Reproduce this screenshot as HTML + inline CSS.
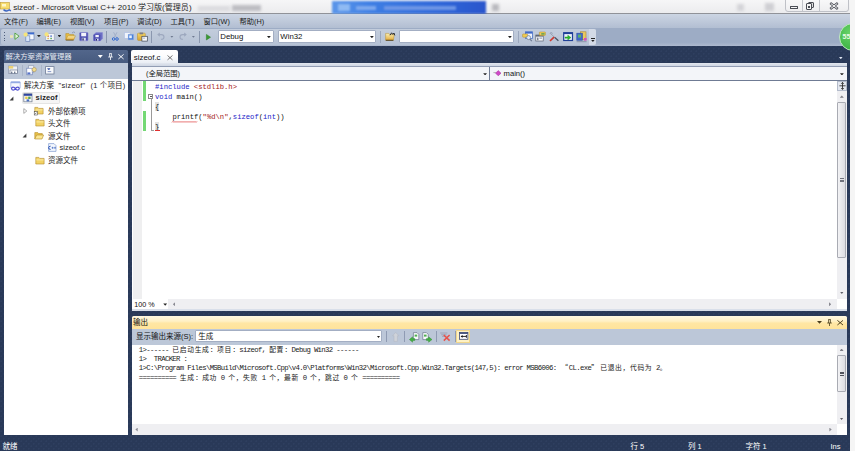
<!DOCTYPE html>
<html lang="zh-CN">
<head>
<meta charset="utf-8">
<title>sizeof - Microsoft Visual C++ 2010</title>
<style>
html,body{margin:0;padding:0;}
body{width:855px;height:451px;overflow:hidden;background:#f5f5f5;position:relative;
  font-family:"Liberation Sans","Noto Sans CJK SC",sans-serif;font-size:7.5px;color:#111;}
.a{position:absolute;white-space:nowrap;line-height:1;}
svg.a{overflow:visible;}
#win{left:0;top:0;width:850px;height:451px;background-color:#293958;background-image:radial-gradient(circle at 1.25px 1.25px,rgba(86,105,148,.13) .6px,transparent 1.2px),radial-gradient(circle at 3.75px 3.75px,rgba(86,105,148,.13) .6px,transparent 1.2px);background-size:5px 5px;overflow:hidden;}
#title{left:0;top:0;width:850px;height:14px;background:linear-gradient(#f6f6f7,#ececee);border-bottom:1px solid #909298;box-sizing:border-box;}
#menu{left:0;top:14px;width:850px;height:14px;background:linear-gradient(#ccd5e3,#b2bed2);}
#tool{left:0;top:28px;width:850px;height:18px;background:linear-gradient(#9dacc5,#9dacc5 80%,#adb9ce);}
#strip{left:1px;top:29px;width:595px;height:16px;background:linear-gradient(#c3cddc,#b6c2d5);border-radius:2px;}
.mi{top:17.9px;font-size:7.3px;color:#1a1a1a;}
.combo{background:#fff;border:1px solid #a3aec3;box-sizing:border-box;height:13px;top:30.3px;font-size:7.8px;border-radius:1px;}
.combo span{position:absolute;left:1.8px;top:2.2px;}
.dd{width:3.8px;height:2.3px;background:#222;clip-path:polygon(0 0,100% 0,50% 100%);}
.sep{width:1px;height:12px;background:#8a97af;top:31px;}
.mono{font-family:"Liberation Mono","Noto Sans CJK SC",monospace;}
.hdr{background:#4d6082;color:#fff;}
.tbar{background:#bcc7d8;}
.tree{font-size:7.5px;color:#1e1e1e;}
.code{font-size:7.2px;}
.out{font-size:7.3px;letter-spacing:-0.65px;color:#1a1a1a;white-space:pre;height:9px;line-height:9px;}
.cj{font-family:'Noto Sans CJK SC',sans-serif;font-size:6.8px;letter-spacing:.64px;line-height:0;}
.st{top:443px;color:#fff;font-size:7.5px;}
.track{background:#efeff2;}
.thumb{background:linear-gradient(90deg,#f3f3f5,#dcdce1);border:1px solid #a9abb3;box-sizing:border-box;border-radius:1px;}
</style>
</head>
<body>
<div id="win" class="a">
<div id="title" class="a"></div>
<div class="a" style="left:198px;top:5.5px;width:32px;height:5px;background:#d6d6da;filter:blur(1.6px);opacity:.8"></div>
<div class="a" style="left:232px;top:5px;width:29px;height:6px;background:#b4b4ba;filter:blur(1.6px);opacity:.85"></div>
<div class="a" style="left:332px;top:1px;width:154px;height:12.5px;background:linear-gradient(90deg,#5b96ea,#3f7fe4 25%,#2f66d8 70%,#2a55cc);filter:blur(.8px);"></div>
<div class="a" style="left:338px;top:4px;width:12px;height:7px;background:#8fbaf3;filter:blur(1px);"></div>
<div class="a" style="left:356px;top:5.5px;width:20px;height:4px;background:#7fa9ee;filter:blur(1.2px);"></div>
<div class="a" style="left:384px;top:5.5px;width:72px;height:4px;background:#6f97e6;filter:blur(1.2px);"></div>
<div class="a" style="left:492px;top:4px;width:7px;height:7px;background:#b9b9be;filter:blur(1.5px);"></div>
<div class="a" style="left:737px;top:4px;width:7px;height:7px;background:#d4d4d8;filter:blur(1.5px);"></div>
<div class="a" style="left:765px;top:3px;width:9px;height:8px;background:#cfcfd3;filter:blur(1.5px);"></div>
<div class="a" style="left:13.3px;top:3.8px;font-size:8.05px;color:#1c1c1c;">sizeof - Microsoft Visual C++ 2010 学习版(管理员)</div>
<svg class="a" style="left:0;top:1px" width="13" height="12" viewBox="0 0 13 12"><rect x="0.3" y="1.5" width="9" height="6.5" fill="#f6dc6e" stroke="#c29a30" stroke-width=".6"/><rect x="2" y="3" width="4" height="2.5" fill="#fff6c8"/><path d="M3.5 8.6 q3 2.6 5.8 0.2 l1.6 1" fill="none" stroke="#3d67c2" stroke-width="1.4"/></svg>
<div class="a" style="left:785px;top:-1px;width:64px;height:12.5px;border:1px solid #bfc1c7;border-radius:0 0 3px 3px;background:linear-gradient(#f8f8f9,#eeeef0);box-sizing:border-box;"></div>
<div class="a" style="left:802.1px;top:0;width:1px;height:11px;background:#c2c4ca;"></div>
<div class="a" style="left:818.5px;top:0;width:1px;height:11px;background:#c2c4ca;"></div>
<div class="a" style="left:790px;top:5.6px;width:8px;height:3.6px;border:1px solid #4a4d55;box-sizing:border-box;background:#f4f4f4;border-radius:.5px"></div>
<div class="a" style="left:807.6px;top:2px;width:6px;height:6px;border:1px solid #4a4d55;box-sizing:border-box;background:#ddd;border-radius:1px"></div>
<div class="a" style="left:806px;top:3.4px;width:6.4px;height:6.4px;border:1px solid #4a4d55;box-sizing:border-box;background:#f4f4f4;border-radius:1px"></div>
<div class="a" style="left:808.4px;top:5.8px;width:1.8px;height:1.8px;background:#4a4d55;"></div>
<svg class="a" style="left:830px;top:3px" width="8" height="6" viewBox="0 0 8 6"><path d="M1.2 0.8 L6.8 5.2 M6.8 0.8 L1.2 5.2" stroke="#50535b" stroke-width="2.4" stroke-linecap="square"/><path d="M1.2 0.8 L6.8 5.2 M6.8 0.8 L1.2 5.2" stroke="#fafafa" stroke-width="1" stroke-linecap="square"/></svg>
<div id="menu" class="a"></div>
<div class="a mi" style="left:4px;">文件(F)</div>
<div class="a mi" style="left:36.5px;">编辑(E)</div>
<div class="a mi" style="left:70px;">视图(V)</div>
<div class="a mi" style="left:104px;">项目(P)</div>
<div class="a mi" style="left:137px;">调试(D)</div>
<div class="a mi" style="left:170.5px;">工具(T)</div>
<div class="a mi" style="left:203.5px;">窗口(W)</div>
<div class="a mi" style="left:239.5px;">帮助(H)</div>
<div id="tool" class="a"></div>
<div id="strip" class="a"></div>
<div class="a" style="left:589px;top:29px;width:7px;height:16px;background:#d3dae6;border-radius:0 2px 2px 0;"></div>
<div class="a" style="left:3.6px;top:32.4px;width:1.1px;height:1.1px;background:#4f5e7a;"></div>
<div class="a" style="left:3.6px;top:35.0px;width:1.1px;height:1.1px;background:#4f5e7a;"></div>
<div class="a" style="left:3.6px;top:37.6px;width:1.1px;height:1.1px;background:#4f5e7a;"></div>
<div class="a" style="left:3.6px;top:40.2px;width:1.1px;height:1.1px;background:#4f5e7a;"></div>
<div class="a combo" style="left:217.5px;width:56px;"><span>Debug</span></div>
<div class="a dd" style="left:267px;top:36px;"></div>
<div class="a combo" style="left:277.5px;width:98.5px;"><span>Win32</span></div>
<div class="a dd" style="left:370px;top:36px;"></div>
<div class="a combo" style="left:398.5px;width:115.5px;"></div>
<div class="a dd" style="left:508px;top:36px;"></div>
<div class="a sep" style="left:105.8px;"></div>
<div class="a sep" style="left:150.7px;"></div>
<div class="a sep" style="left:198.9px;"></div>
<div class="a sep" style="left:379.9px;background:#9ba7bd;"></div>
<div class="a sep" style="left:517.5px;background:#9ba7bd;"></div>
<div class="a dd" style="left:37px;top:35px;"></div>
<div class="a dd" style="left:57.5px;top:35px;"></div>
<div class="a dd" style="left:170px;top:35.5px;background:#6f7a90"></div>
<div class="a dd" style="left:191.5px;top:35.5px;background:#6f7a90"></div>
<svg class="a" style="left:10px;top:32px" width="10" height="9" viewBox="0 0 10 9"><path d="M0 3.2 h3 v2.6 h-3z" fill="#ece6b4"/><path d="M4.9 1 L9.1 4.2 L4.9 7.4z" fill="#e6f5da" stroke="#4da040" stroke-width=".9"/></svg>
<svg class="a" style="left:23px;top:30.5px" width="12" height="12" viewBox="0 0 12 12"><rect x="4.8" y="1.6" width="6.2" height="7.2" fill="#f6f9fe" stroke="#6f86b8" stroke-width=".7"/><rect x="4.8" y="1.6" width="6.2" height="1.8" fill="#3c6cd0"/><rect x="2.8" y="4.8" width="4" height="5.8" fill="#d6e4f8" stroke="#6f86b8" stroke-width=".7"/><circle cx="2.6" cy="3.6" r="2.1" fill="#f5e47c"/></svg>
<svg class="a" style="left:43.5px;top:30.5px" width="11" height="12" viewBox="0 0 11 12"><rect x="1.8" y="2.6" width="8.4" height="7" fill="#f4f6fa" stroke="#9aa5ba" stroke-width=".6"/><rect x="1.8" y="9.2" width="8.4" height=".9" fill="#6a7aa0"/><rect x="3.4" y="4.4" width="1.4" height="1.4" fill="#d04a3a"/><rect x="6.4" y="4.4" width="1.4" height="1.4" fill="#3b62c4"/><rect x="3.4" y="6.8" width="1.4" height="1.4" fill="#e0b030"/><rect x="6.4" y="6.8" width="1.4" height="1.4" fill="#4aa04a"/><circle cx="2.6" cy="3.4" r="2.1" fill="#f5e47c"/></svg>
<svg class="a" style="left:64.5px;top:31.4px" width="11" height="10" viewBox="0 0 11 10"><defs><linearGradient id="fg2" x1="0" y1="0" x2="0" y2="1"><stop offset="0" stop-color="#fbf0b0"/><stop offset="1" stop-color="#e8a834"/></linearGradient></defs><path d="M0.8 9 V2.6 h3 l1 1 h4 v1.4" fill="#e8bc44" stroke="#b08a28" stroke-width=".5"/><path d="M0.8 9 L2.8 4.8 h7.6 L8.6 9z" fill="url(#fg2)" stroke="#b08a28" stroke-width=".5"/><path d="M0.8 9.1 h7.8" stroke="#5a4416" stroke-width=".7"/><path d="M7 2 q1.6 -1.8 3 -0.4" fill="none" stroke="#7c8aa4" stroke-width=".7"/></svg>
<svg class="a" style="left:79px;top:32px" width="10" height="9.4" viewBox="0 0 10 9.4"><rect x="0.6" y="0.5" width="8.4" height="8.2" rx=".8" fill="#4d4fb0" stroke="#7f82d0" stroke-width=".6"/><rect x="2.2" y="0.9" width="5" height="3.4" fill="#f2f3fb"/><rect x="2.8" y="5.8" width="4" height="2.8" fill="#dcdff2"/><rect x="3.4" y="6.3" width="1.3" height="2.2" fill="#1f2460"/></svg>
<svg class="a" style="left:92.5px;top:31.8px" width="10.4" height="9.6" viewBox="0 0 10.4 9.6"><path d="M3 0.6 h6.6 v6 l-2 2.2 h-7 v-6z" fill="#6b6ec4" stroke="#8a8cd6" stroke-width=".5"/><rect x="0.6" y="2.6" width="6.8" height="6.2" rx=".6" fill="#4d4fb0"/><rect x="2.4" y="3" width="3.4" height="2.2" fill="#f2f3fb"/><rect x="2.6" y="6.6" width="3" height="2" fill="#dcdff2"/><rect x="3" y="7" width="1" height="1.6" fill="#1f2460"/></svg>
<svg class="a" style="left:111.8px;top:32.2px" width="7" height="9" viewBox="0 0 7 9"><path d="M1.6 0.3 L4.5 5.6 M5 0.3 L2.1 5.6" stroke="#a3b0ca" stroke-width="1"/><circle cx="1.6" cy="7" r="1.3" fill="none" stroke="#356ad0" stroke-width="1"/><circle cx="5" cy="7" r="1.3" fill="none" stroke="#356ad0" stroke-width="1"/></svg>
<svg class="a" style="left:123.6px;top:32px" width="11" height="9" viewBox="0 0 11 9"><rect x="0.5" y="0.7" width="5.6" height="5.6" fill="#f0f4fb" stroke="#aebfe4" stroke-width=".6"/><rect x="4.2" y="2.4" width="5.2" height="5.4" fill="#4a80d8" stroke="#7ea2e2" stroke-width=".5"/><rect x="5.2" y="3.4" width="2.6" height="2.8" fill="#e8f0fc"/></svg>
<svg class="a" style="left:137.3px;top:31.5px" width="11" height="10" viewBox="0 0 11 10"><defs><linearGradient id="fg3" x1="0" y1="0" x2="0" y2="1"><stop offset="0" stop-color="#f3d768"/><stop offset="1" stop-color="#d9a230"/></linearGradient></defs><rect x="0.5" y="1.2" width="7.8" height="7.2" rx=".8" fill="url(#fg3)" stroke="#b48a26" stroke-width=".5"/><rect x="2.6" y="0.5" width="3.6" height="1.8" fill="#7d7d86"/><rect x="4.9" y="4.3" width="5.4" height="4.8" fill="#f8fafd" stroke="#3c4452" stroke-width=".7"/><rect x="6" y="5.4" width="2.2" height="1.6" fill="#c3cbd9"/></svg>
<svg class="a" style="left:156.5px;top:32px" width="8" height="8" viewBox="0 0 8 8"><path d="M1.2 2.6 h3.2 q2.6 0 2.6 2.4 q0 2.4 -2.8 2.4" fill="none" stroke="#9da8bf" stroke-width="1.1"/><path d="M0.2 2.6 L2.8 0.4 V4.8z" fill="#9da8bf"/></svg>
<svg class="a" style="left:178.5px;top:32px" width="8" height="8" viewBox="0 0 8 8"><path d="M6.8 2.6 h-3.2 q-2.6 0 -2.6 2.4 q0 2.4 2.8 2.4" fill="none" stroke="#9da8bf" stroke-width="1.1"/><path d="M7.8 2.6 L5.2 0.4 V4.8z" fill="#9da8bf"/></svg>
<svg class="a" style="left:206px;top:33.6px" width="5.4" height="6.6" viewBox="0 0 5.4 6.6"><path d="M0.4 0.4 L4.6 3.2 L0.4 6z" fill="#3a9a32" stroke="#2b7d25" stroke-width=".5"/></svg>
<svg class="a" style="left:385px;top:32.2px" width="10.5" height="9.5" viewBox="0 0 10.5 9.5"><defs><linearGradient id="fg1" x1="0" y1="0" x2="0" y2="1"><stop offset="0" stop-color="#f8efb4"/><stop offset="1" stop-color="#e6ac3c"/></linearGradient></defs><path d="M0.6 1.4 h3.2 l0.8 1.2 h4.6 l-0.8 5.6 h-7.8z" fill="url(#fg1)" stroke="#b98f30" stroke-width=".5"/><path d="M0.8 8.3 h7.6" stroke="#4a3a18" stroke-width=".9"/><path d="M5 3.2 l1.6 -2.4 l1.2 1.6 l1.2 -1.4 l0.8 2.4" fill="none" stroke="#222" stroke-width=".9"/></svg>
<svg class="a" style="left:521.5px;top:31px" width="11" height="11" viewBox="0 0 11 11"><rect x="3.4" y="0.8" width="7" height="6.6" fill="#eef3fc" stroke="#4a73c8" stroke-width=".8"/><rect x="3.4" y="0.8" width="7" height="1.8" fill="#3f68c8"/><rect x="0.6" y="3" width="5" height="3.2" rx=".6" fill="#f0cc55" stroke="#b08a26" stroke-width=".5"/><circle cx="6.6" cy="6.6" r="2" fill="#dfe9f8" stroke="#6a7890" stroke-width=".7"/><path d="M8 8.2 L9.8 10.2" stroke="#6a7890" stroke-width="1.1"/></svg>
<svg class="a" style="left:535px;top:31px" width="11" height="11" viewBox="0 0 11 11"><rect x="0.8" y="4" width="7.4" height="6" fill="#f7f8fb" stroke="#5d6675" stroke-width=".7"/><rect x="0.8" y="4" width="7.4" height="1.6" fill="#5d6675"/><rect x="2.2" y="6.6" width="1.2" height="2.6" fill="#5d6675"/><rect x="4.4" y="6.6" width="2.6" height="1" fill="#8791a3"/><rect x="4.4" y="1" width="6" height="3.4" rx=".6" fill="#f0cc55" stroke="#b08a26" stroke-width=".5"/><rect x="6.2" y="2.2" width="3.4" height="1.4" fill="#58a050"/></svg>
<svg class="a" style="left:549px;top:32px" width="11" height="10" viewBox="0 0 11 10"><path d="M9.4 8.8 L5 4.8" stroke="#4a5262" stroke-width="1.2"/><path d="M5 4.8 L1.6 1.6" stroke="#9aa3b5" stroke-width="1"/><path d="M0.8 1.4 q1.4 -1.4 2.8 0" fill="none" stroke="#8a94a8" stroke-width=".9"/><path d="M1 9 L5 5.2" stroke="#d2382c" stroke-width="1.7"/><path d="M5 5.2 L8.8 1.6" stroke="#c9ced9" stroke-width=".9"/></svg>
<svg class="a" style="left:563px;top:32px" width="10.4" height="9.2" viewBox="0 0 10.4 9.2"><rect x="0.7" y="0.7" width="8.8" height="7.8" fill="#eef3fc" stroke="#1f3f98" stroke-width="1.2"/><rect x="0.7" y="0.7" width="8.8" height="1.4" fill="#1f3f98"/><path d="M2 5 h2.8 v-1.8 l3.2 2.4 l-3.2 2.4 v-1.8 h-2.8z" fill="#28bc28" stroke="#1f8a1f" stroke-width=".4"/></svg>
<svg class="a" style="left:576px;top:30.5px" width="12" height="12" viewBox="0 0 12 12"><rect x="4.6" y="0.8" width="5.4" height="8" fill="#e9c860" stroke="#a88a2c" stroke-width=".6"/><rect x="0.8" y="2.2" width="5.6" height="7" fill="#3f68c8" stroke="#2c4fa8" stroke-width=".6"/><rect x="2" y="3.6" width="3" height="3" fill="#59b36a"/><rect x="8" y="7" width="2.6" height="2.6" fill="#d34fc0"/><rect x="0.6" y="10.2" width="10" height="1" fill="#8c96aa"/></svg>
<div class="a" style="left:590.8px;top:37.9px;width:4.2px;height:1px;background:#222;"></div>
<div class="a dd" style="left:591px;top:39.8px;"></div>
<div class="a" style="left:839px;top:22.5px;width:28px;height:28px;border-radius:50%;background:radial-gradient(circle at 40% 35%,#6ad46a,#3fb545 70%,#35a83c);border:1.5px solid #bdecbd;box-sizing:border-box;"></div>
<div class="a" style="left:842.6px;top:32.5px;font-size:7px;color:#eafbe8;font-weight:bold;">55</div>
<div class="a" style="left:4px;top:50px;width:123.8px;height:13px;border-radius:1.5px 1.5px 0 0;background:linear-gradient(#52668b,#475b7f);"></div>
<div class="a" style="left:5.5px;top:53.2px;color:#e4e9f2;font-size:7.35px;">解决方案资源管理器</div>
<div class="a dd" style="left:97.8px;top:55px;width:5px;height:2.9px;background:#fff"></div>
<svg class="a" style="left:108.1px;top:52.8px" width="5" height="7" viewBox="0 0 5 7"><path d="M1.6 0.3 v3.7 M3.4 0.3 v3.7 M1.6 0.6 h1.8 M0.2 4 h4.6 M2.5 4 v3" stroke="#fff" stroke-width=".8" fill="none"/></svg>
<svg class="a" style="left:117.9px;top:54px" width="6" height="5.4" viewBox="0 0 6 5.4"><path d="M0.4 0.4 L5.6 5 M5.6 0.4 L0.4 5" stroke="#fff" stroke-width=".95"/></svg>
<div class="a tbar" style="left:4px;top:63px;width:123.7px;height:16px;"></div>
<svg class="a" style="left:8px;top:65.4px" width="11" height="10" viewBox="0 0 11 10"><rect x="0.6" y="1" width="8.8" height="7.6" fill="#eef1f6" stroke="#8d99b0" stroke-width=".7"/><rect x="0.6" y="1" width="4.6" height="2.6" fill="#ecd275"/><rect x="2" y="5" width="7.4" height="3.6" fill="#fff" stroke="#6f7b92" stroke-width=".7"/><rect x="3" y="6.6" width="1.4" height="2" fill="#6f7b92"/><rect x="6" y="6.6" width="1.4" height="2" fill="#6f7b92"/></svg>
<div class="a" style="left:22px;top:65px;width:1px;height:11px;background:#a9b4c8;"></div>
<svg class="a" style="left:25.6px;top:65px" width="11" height="11" viewBox="0 0 11 11"><rect x="2.4" y="0.8" width="5.4" height="6.6" fill="#fbfcfe" stroke="#8d99b0" stroke-width=".7"/><rect x="0.8" y="3.2" width="5.4" height="6.6" fill="#fff" stroke="#6d80b5" stroke-width=".7"/><rect x="1.4" y="7.4" width="3" height="2" fill="#5572c8"/><circle cx="8.2" cy="4.6" r="2.1" fill="#f1dc8c" stroke="#a7905a" stroke-width=".6"/></svg>
<div class="a" style="left:40.5px;top:65px;width:1px;height:11px;background:#a9b4c8;"></div>
<svg class="a" style="left:45px;top:66.2px" width="10" height="9" viewBox="0 0 10 9"><rect x="0.6" y="0.6" width="8.4" height="7.4" fill="#f6f8fb" stroke="#6f7d98" stroke-width=".8"/><path d="M2.6 2.6 h2.4 l-1.2 1.4z M2.6 5.6 h3.6" fill="#3b55a5" stroke="#3b55a5" stroke-width=".6"/></svg>
<div class="a" style="left:4px;top:79px;width:123.7px;height:355.6px;background:#fff;"></div>
<div class="a tree" style="left:24px;top:82.2px;">解决方案</div>
<div class="a tree" style="left:58.6px;top:82.2px;letter-spacing:.25px;">"sizeof"</div>
<div class="a tree" style="left:90.6px;top:82.2px;letter-spacing:.15px;">(1 个项目)</div>
<div class="a" style="left:21.5px;top:92px;width:38.2px;height:11.6px;background:#f5f5f5;border:1px solid #e4e4e4;border-radius:1.5px;box-sizing:border-box;"></div>
<div class="a tree" style="left:35.6px;top:94.1px;font-weight:bold;letter-spacing:.15px;">sizeof</div>
<div class="a tree" style="left:48px;top:107.7px;">外部依赖项</div>
<div class="a tree" style="left:48px;top:119.8px;">头文件</div>
<div class="a tree" style="left:48px;top:132.7px;">源文件</div>
<div class="a tree" style="left:59.5px;top:144.2px;">sizeof.c</div>
<div class="a tree" style="left:48px;top:157.4px;">资源文件</div>
<svg class="a" style="left:10.2px;top:80.8px" width="11" height="10.5" viewBox="0 0 11 10.5"><rect x="0.8" y="0.7" width="9.4" height="6.8" rx=".6" fill="#f6f8fd" stroke="#a6b8e4" stroke-width=".8"/><rect x="0.8" y="0.7" width="9.4" height="1.5" fill="#93aae3"/><path d="M5.4 7.6 C4.2 5.6 1.6 5.6 1.6 7.6 C1.6 9.6 4.2 9.6 5.4 7.6 C6.6 5.6 9.2 5.6 9.2 7.6 C9.2 9.6 6.6 9.6 5.4 7.6z" fill="#fff" stroke="#4f4fd0" stroke-width="1.2"/></svg>
<svg class="a" style="left:8.9px;top:95.7px" width="5" height="5" viewBox="0 0 5 5"><path d="M4.4 0.6 V4.4 H0.6z" fill="#3c3c3c"/></svg>
<svg class="a" style="left:21.6px;top:133.1px" width="5" height="5" viewBox="0 0 5 5"><path d="M4.4 0.6 V4.4 H0.6z" fill="#3c3c3c"/></svg>
<svg class="a" style="left:22.6px;top:107.5px" width="5" height="6" viewBox="0 0 5 6"><path d="M0.8 0.6 L3.8 3 L0.8 5.4z" fill="#fff" stroke="#8d8d8d" stroke-width=".7"/></svg>
<svg class="a" style="left:23px;top:93px" width="10" height="10" viewBox="0 0 10 10"><rect x="0.8" y="0.8" width="8.2" height="8" fill="#f4f7fb" stroke="#7b8596" stroke-width=".8"/><rect x="0.8" y="0.8" width="8.2" height="2" fill="#2f459f"/><rect x="2.2" y="3.6" width="2.4" height="2.4" fill="#e8c94a"/><rect x="5.2" y="3.6" width="2.4" height="2.4" fill="#58a058"/><rect x="3.6" y="6.4" width="2.6" height="2" fill="#4a6fc0"/></svg>
<svg class="a" style="left:34.4px;top:105.7px" width="10" height="10" viewBox="0 0 10 10"><path d="M0.8 8 V1.4 h3 l0.9 1 h4.4 V8z" fill="#f2d264" stroke="#b1892a" stroke-width=".6"/><rect x="1.4" y="3.4" width="7.2" height="1" fill="#faeaa6"/><rect x="0.2" y="5.6" width="3.4" height="3.4" fill="#fff" stroke="#333" stroke-width=".5"/><path d="M1 8.2 l1.6 -1.6" stroke="#222" stroke-width=".6"/></svg>
<svg class="a" style="left:34.8px;top:118.0px" width="10" height="10" viewBox="0 0 10 10"><path d="M0.8 8 V1.4 h3 l0.9 1 h4.4 V8z" fill="#f2d264" stroke="#b1892a" stroke-width=".6"/><rect x="1.4" y="3.4" width="7.2" height="1" fill="#faeaa6"/></svg>
<svg class="a" style="left:34.4px;top:130.6px" width="10" height="10" viewBox="0 0 10 10"><path d="M0.8 8 V1.6 h3 l0.9 1 h3.6 v1.4" fill="#e9c24a" stroke="#b1892a" stroke-width=".6"/><path d="M0.8 8 L2.6 4 h7 L8 8z" fill="#fbe692" stroke="#b1892a" stroke-width=".6"/></svg>
<svg class="a" style="left:34.8px;top:155.6px" width="10" height="10" viewBox="0 0 10 10"><path d="M0.8 8 V1.4 h3 l0.9 1 h4.4 V8z" fill="#f2d264" stroke="#b1892a" stroke-width=".6"/><rect x="1.4" y="3.4" width="7.2" height="1" fill="#faeaa6"/></svg>
<svg class="a" style="left:47px;top:143.3px" width="10" height="9" viewBox="0 0 10 9"><path d="M1.6 0.6 h5.4 l2 2 v5.8 h-7.4z" fill="#f3f7fd" stroke="#7f9bd0" stroke-width=".7"/><path d="M3.6 3.2 q-2 0 -2 1.6 q0 1.6 2 1.6" fill="none" stroke="#2c55b8" stroke-width="1"/><path d="M4.6 4.8 h2 M5.6 3.8 v2 M7.2 4.8 h1.6 M8 3.8 v2" stroke="#2c55b8" stroke-width=".6"/></svg>
<div class="a" style="left:131.4px;top:49.8px;width:46.3px;height:13.4px;background:linear-gradient(#fff,#fbfcfd 50%,#e9edf4);border-radius:2px 2px 0 0;"></div>
<div class="a" style="left:131.5px;top:62.6px;width:715.5px;height:3.7px;background:linear-gradient(#e2e7ef,#cfd6e3);"></div>
<div class="a" style="left:133.8px;top:53.6px;font-size:7.9px;">sizeof.c</div>
<svg class="a" style="left:167.2px;top:54.8px" width="6" height="5.4" viewBox="0 0 6 5.4"><path d="M0.5 0.5 L5.5 4.9 M5.5 0.5 L0.5 4.9" stroke="#555" stroke-width=".8"/></svg>
<div class="a" style="left:838.6px;top:56.6px;width:4.4px;height:2.6px;background:#dfe5f0;clip-path:polygon(0 0,100% 0,50% 100%);"></div>
<div class="a" style="left:131.5px;top:66.2px;width:715.5px;height:14.6px;background:linear-gradient(#929db4,#929db4 8%,#6f7b94 9%);"></div>
<div class="a" style="left:131.5px;top:67px;width:357.6px;height:13px;background:#f3f5f9;"></div>
<div class="a" style="left:490.1px;top:67px;width:356.9px;height:13px;background:#f3f5f9;"></div>
<div class="a" style="left:146px;top:70.3px;font-size:7.3px;">(全局范围)</div>
<div class="a" style="left:503.6px;top:70px;font-size:7.6px;">main()</div>
<div class="a dd" style="left:483.2px;top:73.2px;"></div>
<div class="a dd" style="left:840px;top:73.2px;"></div>
<svg class="a" style="left:493px;top:70px" width="9" height="7" viewBox="0 0 9 7"><path d="M0.4 2.6 h2.6" stroke="#999" stroke-width=".7"/><path d="M5.2 0.6 L8 3.2 L5.2 5.8 L2.6 3.2z" fill="#d04ac8" stroke="#9c2a96" stroke-width=".5"/></svg>
<div class="a" style="left:131.5px;top:80.8px;width:715.5px;height:228.5px;background:#fff;"></div>
<div class="a" style="left:131.5px;top:309.3px;width:715.5px;height:2.1px;background:#d9dfea;"></div>
<div class="a" style="left:132.8px;top:80.8px;width:9.3px;height:218px;background:#efeff0;"></div>
<div class="a" style="left:143.2px;top:81px;width:3px;height:20px;background:#74d874;"></div>
<div class="a" style="left:143.2px;top:111px;width:3px;height:20px;background:#74d874;"></div>
<div class="a" style="left:155.2px;top:102.4px;width:4.1px;height:8.2px;background:#e2e2e2;"></div>
<div class="a" style="left:155.2px;top:121.8px;width:4.1px;height:8.4px;background:#e2e2e2;"></div>
<div class="a mono code" style="left:155px;top:83.89999999999999px;"><span style="color:#1c1cc8">#include</span> <span style="color:#a31515">&lt;stdlib.h&gt;</span></div>
<div class="a mono code" style="left:155px;top:93.89999999999999px;"><span style="color:#1c1cc8">void</span> main()</div>
<div class="a mono code" style="left:155px;top:103.89999999999999px;">{</div>
<div class="a mono code" style="left:172.4px;top:113.89999999999999px;">printf(<span style="color:#a31515">"%d\n"</span>,<span style="color:#1c1cc8">sizeof</span>(<span style="color:#1c1cc8">int</span>))</div>
<div class="a mono code" style="left:155px;top:123.89999999999999px;">}</div>
<div class="a" style="left:148.2px;top:94.1px;width:5.2px;height:5.2px;border:.7px solid #8a8a8a;box-sizing:border-box;background:#fff;"></div>
<div class="a" style="left:149.5px;top:96.4px;width:2.6px;height:.7px;background:#555;"></div>
<div class="a" style="left:151.4px;top:99.3px;width:.8px;height:31px;background:#9a9a9a;"></div>
<div class="a" style="left:151.4px;top:129.6px;width:2.6px;height:.8px;background:#9a9a9a;"></div>
<div class="a" style="left:155.2px;top:130.2px;width:4.4px;height:.9px;background:#e03030;"></div>
<svg class="a" style="left:172.4px;top:120.8px" width="26" height="2" viewBox="0 0 26 2"><path d="M0 1.4 l1 -1 l1 1 l1 -1 l1 1 l1 -1 l1 1 l1 -1 l1 1 l1 -1 l1 1 l1 -1 l1 1 l1 -1 l1 1 l1 -1 l1 1 l1 -1 l1 1 l1 -1 l1 1 l1 -1 l1 1 l1 -1 l1 1 l1 -1" fill="none" stroke="#dc3838" stroke-width=".75"/></svg>
<div class="a track" style="left:836.8px;top:80.8px;width:10.2px;height:218.2px;"></div>
<div class="a" style="left:836.8px;top:80.8px;width:10.2px;height:10.2px;background:#e3e7f0;border:1px solid #b3bbcb;box-sizing:border-box;"></div>
<svg class="a" style="left:838.6px;top:82px" width="7" height="8" viewBox="0 0 7 8"><path d="M0.4 3.8 h6.2 M3.5 0.4 v7 M2.2 1.8 L3.5 0.4 L4.8 1.8 M2.2 6 L3.5 7.4 L4.8 6" stroke="#222" stroke-width=".8" fill="none"/></svg>
<div class="a" style="left:839.8px;top:95.4px;width:4px;height:2.3px;background:#7d7d85;clip-path:polygon(50% 0,100% 100%,0 100%);"></div>
<div class="a thumb" style="left:837.4px;top:102.2px;width:8.8px;height:156px;"></div>
<div class="a" style="left:839.6px;top:178.4px;width:4.4px;height:.7px;background:#70727c;"></div>
<div class="a" style="left:839.6px;top:179.9px;width:4.4px;height:.7px;background:#70727c;"></div>
<div class="a" style="left:839.6px;top:181.4px;width:4.4px;height:.7px;background:#70727c;"></div>
<div class="a" style="left:839.8px;top:291.6px;width:4px;height:2.3px;background:#606068;clip-path:polygon(0 0,100% 0,50% 100%);"></div>
<div class="a track" style="left:168.3px;top:298.8px;width:668.5px;height:10.5px;"></div>
<div class="a" style="left:134.3px;top:300.8px;font-size:7.2px;">100 %</div>
<div class="a dd" style="left:163.3px;top:303.4px;"></div>
<div class="a" style="left:172.8px;top:302.2px;width:2.3px;height:4px;background:#8a8a92;clip-path:polygon(100% 0,100% 100%,0 50%);"></div>
<div class="a" style="left:829px;top:302.2px;width:2.3px;height:4px;background:#8a8a92;clip-path:polygon(0 0,100% 50%,0 100%);"></div>
<div class="a" style="left:131.5px;top:315.6px;width:715.5px;height:13.2px;background:linear-gradient(#fff8e2,#fff0c4 40%,#ffe6a4 55%,#ffe39b);border-radius:1.5px 1.5px 0 0;"></div>
<div class="a" style="left:133px;top:318.8px;font-size:7.5px;">输出</div>
<div class="a dd" style="left:817px;top:320.9px;width:5px;height:2.9px;background:#4a3d1c"></div>
<svg class="a" style="left:827.2px;top:318.5px" width="5" height="7" viewBox="0 0 5 7"><path d="M1.6 0.3 v3.7 M3.4 0.3 v3.7 M1.6 0.6 h1.8 M0.2 4 h4.6 M2.5 4 v3" stroke="#4a3d1c" stroke-width=".8" fill="none"/></svg>
<svg class="a" style="left:837px;top:319.7px" width="6.4" height="5.4" viewBox="0 0 6.4 5.4"><path d="M0.4 0.4 L6 5 M6 0.4 L0.4 5" stroke="#4a3d1c" stroke-width=".95"/></svg>
<div class="a tbar" style="left:131.5px;top:328.8px;width:715.5px;height:16px;"></div>
<div class="a" style="left:136px;top:332.8px;font-size:7.5px;">显示输出来源(S):</div>
<div class="a combo" style="left:194.6px;top:330.4px;width:187.6px;height:12px;"><span style="top:1.6px;left:2.6px;font-size:7.5px">生成</span></div>
<div class="a dd" style="left:376.6px;top:335.6px;"></div>
<div class="a" style="left:386px;top:331px;width:1px;height:11px;background:#8f9bb3;"></div>
<div class="a" style="left:404px;top:331px;width:1px;height:11px;background:#8f9bb3;"></div>
<div class="a" style="left:436px;top:331px;width:1px;height:11px;background:#8f9bb3;"></div>
<div class="a" style="left:454.5px;top:331px;width:1px;height:11px;background:#8f9bb3;"></div>
<svg class="a" style="left:392px;top:331.8px" width="7.4" height="10" viewBox="0 0 7.4 10"><path d="M3.7 0.4 L6.9 3.8 H5.4 V9.4 H2 V3.8 H0.5z" fill="#cfd3da" stroke="#b3b9c5" stroke-width=".6"/></svg>
<svg class="a" style="left:408.5px;top:331.5px" width="11" height="10.5" viewBox="0 0 11 10.5"><path d="M4.4 0.6 h3.6 l1.8 1.8 v5.2 h-5.4z" fill="#f8fafc" stroke="#6a768c" stroke-width=".7"/><rect x="5.6" y="2.6" width="2.6" height="2" fill="#52b052"/><path d="M5.8 6.6 h-2.2 v-1.8 L0.4 7.6 l3.2 2.6 v-1.8 h2.2z" fill="#43b043" stroke="#2a8a2a" stroke-width=".4"/></svg>
<svg class="a" style="left:422px;top:331.5px" width="11" height="10.5" viewBox="0 0 11 10.5"><path d="M0.8 0.6 h3.6 l1.8 1.8 v5.2 h-5.4z" fill="#f8fafc" stroke="#6a768c" stroke-width=".7"/><rect x="2" y="2.6" width="2.6" height="2" fill="#52b052"/><path d="M4.4 6.6 h2.2 v-1.8 L10 7.6 l-3.4 2.6 v-1.8 h-2.2z" fill="#43b043" stroke="#2a8a2a" stroke-width=".4"/></svg>
<svg class="a" style="left:440px;top:332.4px" width="11" height="9.5" viewBox="0 0 11 9.5"><path d="M0.2 1 h7.2 M1.2 2.8 h5.4 M2 4.4 h3" stroke="#9aa2b4" stroke-width=".9"/><path d="M3.8 3 L9.6 8.6 M9.6 3 L3.8 8.6" stroke="#e8524a" stroke-width="1.5"/></svg>
<div class="a" style="left:456.3px;top:329.9px;width:13.4px;height:13.3px;background:#fdf1c4;border:1px solid #f0d68c;box-sizing:border-box;"></div>
<svg class="a" style="left:458.8px;top:332.4px" width="9.4" height="7.8" viewBox="0 0 9.4 7.8"><rect x="0.5" y="0.5" width="8.4" height="6.8" fill="#fff" stroke="#3c4a76" stroke-width=".8"/><rect x="0.5" y="0.5" width="8.4" height="1.4" fill="#3c4a76"/><path d="M2.6 4.4 h4.6 M7.4 3 v2.8" stroke="#111" stroke-width=".9" fill="none"/><path d="M1.6 4.4 L3.6 3 V5.8z" fill="#111"/></svg>
<div class="a" style="left:131.5px;top:344.8px;width:715.5px;height:89.9px;background:#fff;"></div>
<div class="a mono out" style="left:138.8px;top:345.5px;">1&gt;------ <span class="cj">已启动生成</span>: <span class="cj">项目</span>: sizeof, <span class="cj">配置</span>: Debug Win32 ------</div>
<div class="a mono out" style="left:138.8px;top:354.85px;">1&gt;  TRACKER :</div>
<div class="a mono out" style="left:138.8px;top:364.2px;">1&gt;C:\Program Files\MSBuild\Microsoft.Cpp\v4.0\Platforms\Win32\Microsoft.Cpp.Win32.Targets(147,5): error MSB6006: <span class="cj" style="margin-left:1.2px">“</span>CL.exe<span class="cj">”</span><span class="cj" style="margin-left:1.6px">已退出，代码为</span> 2<span class="cj">。</span></div>
<div class="a mono out" style="left:138.8px;top:373.55px;">========== <span class="cj">生成</span>: <span class="cj">成功</span> 0 <span class="cj">个，失败</span> 1 <span class="cj">个，最新</span> 0 <span class="cj">个，跳过</span> 0 <span class="cj">个</span> ==========</div>
<div class="a track" style="left:836.6px;top:344.8px;width:10.4px;height:79.6px;"></div>
<div class="a" style="left:839.6px;top:348.6px;width:4px;height:2.3px;background:#7d7d85;clip-path:polygon(50% 0,100% 100%,0 100%);"></div>
<div class="a thumb" style="left:837.4px;top:355.4px;width:8.8px;height:37px;"></div>
<div class="a" style="left:839.6px;top:371.8px;width:4.4px;height:.7px;background:#50525c;"></div>
<div class="a" style="left:839.6px;top:373.3px;width:4.4px;height:.7px;background:#50525c;"></div>
<div class="a" style="left:839.6px;top:374.8px;width:4.4px;height:.7px;background:#50525c;"></div>
<div class="a" style="left:839.6px;top:417.6px;width:4px;height:2.3px;background:#606068;clip-path:polygon(0 0,100% 0,50% 100%);"></div>
<div class="a track" style="left:131.5px;top:424.4px;width:705px;height:10.3px;"></div>
<div class="a" style="left:135.4px;top:427.6px;width:2.3px;height:4px;background:#8a8a92;clip-path:polygon(100% 0,100% 100%,0 50%);"></div>
<div class="a" style="left:829.4px;top:427.6px;width:2.3px;height:4px;background:#8a8a92;clip-path:polygon(0 0,100% 50%,0 100%);"></div>
<div class="a st" style="left:2.5px;">就绪</div>
<div class="a st" style="left:630.5px;">行 5</div>
<div class="a st" style="left:688px;">列 1</div>
<div class="a st" style="left:745.5px;">字符 1</div>
<div class="a st" style="left:830.5px;">Ins</div>
</div>
</body>
</html>
